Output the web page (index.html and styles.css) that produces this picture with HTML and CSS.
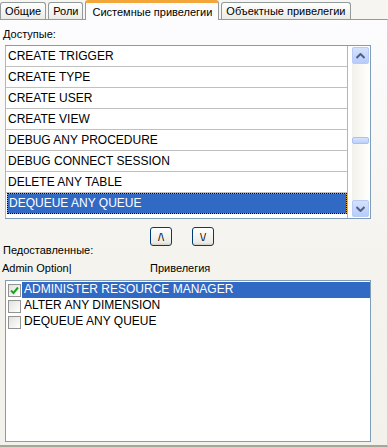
FILE: index.html
```html
<!DOCTYPE html>
<html lang="ru">
<head>
    <meta charset="UTF-8">
    <title>Привелегии</title>
    <link rel="stylesheet" href="styles.css">
</head>
<body>

    <div class="tabs">
        <div class="tab">Общие</div>
        <div class="tab">Роли</div>
        <div class="tab active">Системные привелегии</div>
        <div class="tab">Объектные привелегии</div>
    </div>

    <div class="panel">
        <div class="caption">Доступые:</div>

        <div class="listbox available">
            <div class="rows">
                <div class="row">CREATE TRIGGER</div>
                <div class="row">CREATE TYPE</div>
                <div class="row">CREATE USER</div>
                <div class="row">CREATE VIEW</div>
                <div class="row">DEBUG ANY PROCEDURE</div>
                <div class="row">DEBUG CONNECT SESSION</div>
                <div class="row">DELETE ANY TABLE</div>
                <div class="row selected">DEQUEUE ANY QUEUE</div>
            </div>
            <div class="scrollbar">
                <div class="sb-btn">
                    <svg width="9" height="6" viewBox="0 0 9 6"><path d="M0.5 5 L4.5 1 L8.5 5" fill="none" stroke="#4d6185" stroke-width="2"/></svg>
                </div>
                <div class="sb-track"><div class="sb-thumb"></div></div>
                <div class="sb-btn">
                    <svg width="9" height="6" viewBox="0 0 9 6"><path d="M0.5 1 L4.5 5 L8.5 1" fill="none" stroke="#4d6185" stroke-width="2"/></svg>
                </div>
            </div>
        </div>

        <div class="move-buttons">
            <button type="button" class="move">/\</button>
            <button type="button" class="move">\/</button>
        </div>

        <div class="caption granted">Педоставленные:</div>
        <div class="headers">
            <span class="col-admin">Admin Option|</span>
            <span>Привелегия</span>
        </div>

        <div class="listbox granted-list">
            <div class="check-row">
                <span class="checkbox checked">
                    <svg width="9" height="9" viewBox="0 0 9 9"><path d="M1 4.5 L3.5 7 L8 1.5" fill="none" stroke="#21a121" stroke-width="2"/></svg>
                </span>
                <span class="item selected">ADMINISTER RESOURCE MANAGER</span>
            </div>
            <div class="check-row">
                <span class="checkbox"></span>
                <span class="item">ALTER ANY DIMENSION</span>
            </div>
            <div class="check-row">
                <span class="checkbox"></span>
                <span class="item">DEQUEUE ANY QUEUE</span>
            </div>
        </div>
    </div>

</body>
</html>
```

FILE: styles.css
```css
* {
    box-sizing: border-box;
}
body {
    margin: 0;
    width: 388px;
    height: 447px;
    font-family: "Liberation Sans", Arial, sans-serif;
    font-size: 11px;
    line-height: 13px;
    color: #000;
    background-color: #f4f3ee;
    overflow: hidden;
}
.tabs {
    display: flex;
    align-items: flex-end;
    height: 19px;
    background-color: #f6f5f1;
}
.tab {
    height: 17px;
    padding: 2px 4px 0 4px;
    margin-right: 2px;
    border: 1px solid #919b9c;
    border-bottom: none;
    border-radius: 3px 3px 0 0;
    background: linear-gradient(#ffffff, #ecebe6);
    white-space: nowrap;
}
.tab.active {
    height: 20px;
    margin-bottom: -1px;
    padding: 3px 6px 0 6px;
    border-top: 3px solid #f3a73a;
    background: #fcfcfe;
    position: relative;
    z-index: 1;
}
.panel {
    height: 428px;
    padding-top: 8px;
    border-top: 1px solid #919b9c;
    border-right: 1px solid #d6d4c9;
    border-bottom: 2px solid #a8a797;
    background: linear-gradient(#fcfcfe, #f4f3ee 55%, #f2f1ec);
}
.caption {
    padding-left: 3px;
}
.listbox {
    margin: 4px 0 0 5px;
    width: 366px;
    border: 1px solid #7f9db9;
    background-color: #fff;
}
.available {
    display: flex;
    height: 174px;
}
.rows {
    width: 343px;
    border-left: 1px solid #b5b5b5;
    border-right: 1px solid #b5b5b5;
    margin-left: -1px;
    font-size: 12px;
}
.row {
    height: 21px;
    padding: 4px 0 0 2px;
    border-bottom: 1px solid #c0c0c0;
    white-space: nowrap;
}
.row.selected {
    margin-left: 1px;
    border: 1px dotted #000;
    padding: 3px 0 0 1px;
    color: #fff;
    background: linear-gradient(#316ac5, #316ac5) padding-box, #d89a32 border-box;
}
.scrollbar {
    display: flex;
    flex-direction: column;
    width: 17px;
    margin: 1px 0 1px 4px;
    background: linear-gradient(to right, #f3f1ec, #fefefb);
}
.sb-btn {
    height: 17px;
    display: flex;
    align-items: center;
    justify-content: center;
    border: 1px solid #b8cbf6;
    border-radius: 2px;
    background: linear-gradient(#d5e2fd, #b7ccfa);
}
.sb-track {
    flex: 1;
}
.sb-thumb {
    margin-top: 73px;
    height: 7px;
    border: 1px solid #a9c0f5;
    border-radius: 2px;
    background: linear-gradient(#d7e3fd, #bcd0fb);
}
.move-buttons {
    display: flex;
    gap: 20px;
    margin: 8px 0 0 150px;
}
.move {
    width: 22px;
    height: 19px;
    padding: 0;
    font-family: "Liberation Sans", Arial, sans-serif;
    font-size: 11px;
    color: #000;
    border: 1px solid #003c74;
    border-radius: 3px;
    background: linear-gradient(#ffffff, #ecebe6 85%, #d6d0c5);
}
.granted {
    margin-top: -2px;
}
.headers {
    display: flex;
    margin-top: 5px;
    padding-left: 2px;
}
.col-admin {
    width: 148px;
}
.granted-list {
    margin-top: 5px;
    height: 162px;
    padding-top: 1px;
}
.check-row {
    display: flex;
    align-items: center;
    height: 16px;
    padding-left: 2px;
}
.checkbox {
    width: 13px;
    height: 13px;
    margin-right: 1px;
    border: 1px solid #929292;
    background: linear-gradient(135deg, #e2e2dd, #ffffff);
    display: flex;
    align-items: center;
    justify-content: center;
}
.item {
    flex: 1;
    height: 16px;
    padding: 1px 0 0 2px;
    font-size: 12px;
    white-space: nowrap;
}
.item.selected {
    color: #fff;
    background-color: #316ac5;
}
```
